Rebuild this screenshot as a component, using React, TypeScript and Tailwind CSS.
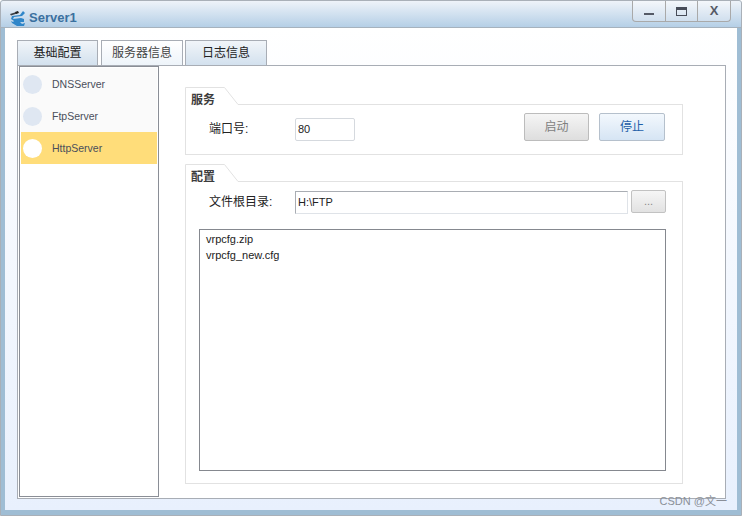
import React from "react";

const FONT = "[font-family:'Liberation_Sans','Noto_Sans_CJK_SC',sans-serif]";

function Logo() {
  return (
    <svg width="18" height="18" viewBox="0 0 18 18" className="shrink-0">
      <path d="M1 5 L9 2.5 L8 4.5 L2 6.5 Z" fill="#3a3f46" />
      <path d="M6 3 L9 2 L10 4 L7 5 Z" fill="#222" />
      <path d="M14 2 L16 4 L13 7 L5 8 L4 10 L12 9 L15 10 L15 13 L11 13 L13 15 L16 14 L15 17 L8 17 L3 14 L2 12 L4 13 L5 12 L2 10 L3 7 L11 6 Z" fill="#2f86c9" />
    </svg>
  );
}

function Tab({ label, active, first }: { label: string; active?: boolean; first?: boolean }) {
  return (
    <div
      className={`h-[25px] border border-b-0 border-[#a8adb5] flex items-center justify-center text-[12px] ${
        first ? "w-[81px] mr-px" : "w-[82px]"
      } ${
        active ? "bg-gradient-to-b from-white to-[#eef4fa] text-[#444]" : "bg-gradient-to-b from-[#f1f5f9] to-[#d3e1ee] text-[#222]"
      }`}
    >
      {label}
    </div>
  );
}

function ListItem({ label, active }: { label: string; active?: boolean }) {
  return (
    <div className={`h-8 flex items-center ${active ? "bg-[#ffdd7a]" : ""}`}>
      <div className={`ml-[2px] w-[19px] h-[19px] rounded-full ${active ? "bg-white" : "bg-[#dfe7f2]"}`} />
      <span className="ml-[10px] mt-[2px] text-[10.5px] text-[#4a4f5a]">{label}</span>
    </div>
  );
}

function GroupHead({ label }: { label: string }) {
  return (
    <div className="relative h-[18px]">
      <svg className="absolute left-0 top-0" width="100%" height="18">
        <path d="M0.5 18 V0.5 H39.5 L53 17.5 H600" fill="white" stroke="#e2e2e2" />
      </svg>
      <span className="absolute left-[6px] top-[5px] text-[12px] leading-4 font-bold text-[#3c3c3c]">{label}</span>
    </div>
  );
}

function Btn({ label, primary }: { label: string; primary?: boolean }) {
  return (
    <div
      className={`h-7 rounded-[2px] border flex items-center justify-center text-[12px] ${
        primary
          ? "w-[66px] border-[#b5c0cc] bg-gradient-to-b from-[#f3f8fd] to-[#d6e5f4] text-[#1f5fa8]"
          : "w-[65px] border-[#bcbcbc] bg-gradient-to-b from-[#f5f5f5] to-[#dedede] text-[#808080]"
      }`}
    >
      {label}
    </div>
  );
}

export default function App() {
  return (
    <div className={`${FONT} relative w-[742px] h-[516px] overflow-hidden flex flex-col border border-[#a9b0b8] rounded-t-[3px] bg-[#9fbdd4]`}>
      {/* Title bar */}
      <div className="h-[27px] shrink-0 flex items-start justify-between bg-gradient-to-b from-[#eef3f9] to-[#b5cfe6] border-b border-[#a6b2bd]">
        <div className="flex items-center gap-[2px] pl-2 pt-[8px]">
          <Logo />
          <span className="text-[13px] font-bold text-[#3a709f] leading-[18px]">Server1</span>
        </div>
        <div className="mr-[10px] flex h-[21px] w-[99px] border border-t-0 border-[#a9a9a9] rounded-b-[4px] bg-gradient-to-b from-[#f4f7fb] to-[#d0dfee]">
          <div className="flex-1 flex items-center justify-center border-r border-[#a9a9a9]">
            <div className="w-[10px] h-[2px] mt-[6px] bg-[#555a66]" />
          </div>
          <div className="flex-1 flex items-center justify-center border-r border-[#a9a9a9]">
            <div className="w-[11px] h-[9px] border border-t-[3px] border-[#474c58]" />
          </div>
          <div className="flex-1 flex items-center justify-center text-[13px] font-bold text-[#555a66]">X</div>
        </div>
      </div>

      {/* Body */}
      <div className="flex-1 ml-1 mr-[4px] mb-[5px] bg-gradient-to-b from-white to-[#e8f0fd] pl-3 pr-[11px] pt-3 pb-[11px] flex flex-col">
        <div className="flex gap-[2px] items-end h-[25px] shrink-0">
          <Tab label="基础配置" first />
          <Tab label="服务器信息" active />
          <Tab label="日志信息" />
        </div>
        <div className="flex-1 min-h-0 border border-[#a8adb5] bg-white flex pl-px pb-px">
          {/* List */}
          <div className="w-[140px] border border-[#8a8e96] shrink-0 bg-white">
            <div className="pl-px pt-px pr-px">
              <div className="bg-[#fafafa]">
                <ListItem label="DNSServer" />
                <ListItem label="FtpServer" />
              </div>
              <ListItem label="HttpServer" active />
            </div>
          </div>

          {/* Right */}
          <div className="flex-1 pl-[26px] pr-[42px] pt-[21px] flex flex-col">
            <GroupHead label="服务" />
            <div className="h-[50px] border border-t-0 border-[#e2e2e2] pl-[23px] pr-[17px] flex items-start">
              <span className="mt-[16px] w-[86px] text-[12px] text-[#222] leading-[16px]">端口号:</span>
              <div className="mt-[13px] w-[60px] h-[23px] border border-[#d5d9de] rounded-[2px] flex items-center pl-[2px] text-[11px] text-[#222]">80</div>
              <div className="ml-auto mt-2 flex gap-[10px]">
                <Btn label="启动" />
                <Btn label="停止" primary />
              </div>
            </div>

            <div className="mt-[9px]">
              <GroupHead label="配置" />
            </div>
            <div className="h-[302px] border border-t-0 border-[#e2e2e2] pl-[13px] pr-4 flex flex-col">
              <div className="flex items-start pl-[10px]">
                <span className="mt-[12px] w-[86px] text-[12px] text-[#222] leading-[16px]">文件根目录:</span>
                <div className="mt-[9px] w-[333px] h-[23px] border border-[#a9adb3] border-r-[#dfe3e8] border-b-[#dfe3e8] flex items-center pl-[2px] text-[11px] text-[#222]">H:\FTP</div>
                <div className="ml-[3px] mt-[8px] w-[35px] h-[23px] border border-[#c2c2c2] rounded-[2px] bg-gradient-to-b from-[#f6f6f6] to-[#e2e2e2] flex items-center justify-center text-[11px] text-[#888]">...</div>
              </div>
              <div className="mt-[15px] w-[467px] h-[242px] border border-[#85888f] pl-[6px] pt-[1px] text-[11px] leading-4 text-[#222]">
                <div>vrpcfg.zip</div>
                <div>vrpcfg_new.cfg</div>
              </div>
            </div>
          </div>
        </div>
      </div>

      <span className="absolute right-[14px] bottom-[7px] text-[11px] leading-[14px] text-[#8a8f98]">CSDN @文一</span>
    </div>
  );
}
